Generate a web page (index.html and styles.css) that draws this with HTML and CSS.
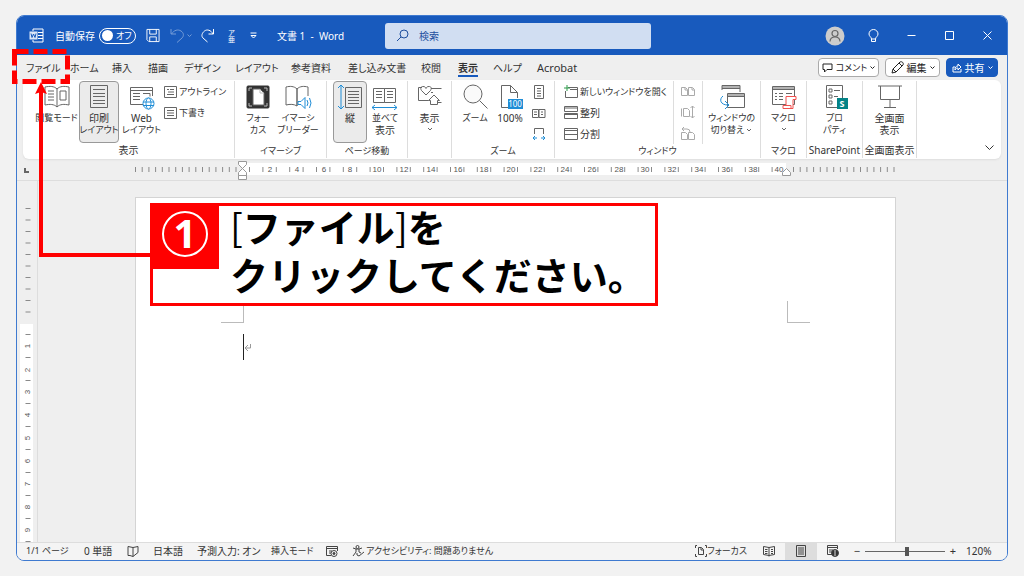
FILE: index.html
```html
<!DOCTYPE html>
<html lang="ja">
<head>
<meta charset="utf-8">
<title>文書 1 - Word</title>
<link rel="stylesheet" href="styles.css">
</head>
<body>
<div class="window">
  <header class="titlebar">
    <svg class="ico" width="15" height="15" viewBox="0 0 15 15"><path d="M4 3V1h10v13H4v-2M9 4.500h5M9 7.500h5M9 10.500h5"/><rect x="0.500" y="3.500" width="8" height="8" fill="#dbe6f7" stroke="none"/><path d="M2 5.500l1 4 1.500-3.500L6 9.500l1-4" stroke="#185abd"/></svg>
    <span class="autosave">自動保存</span>
    <button class="toggle" aria-label="自動保存 オフ"><i class="knob"></i>オフ</button>
    <button class="tb" aria-label="上書き保存"><svg class="ico" width="14" height="15" viewBox="0 0 15 15"><path d="M1 1h13v13H3l-2-2zM4 1v5h7V1M4 14V9h7v5"/></svg></button>
    <button class="tb dim" aria-label="元に戻す"><svg class="ico" width="23" height="15" viewBox="0 0 23 15"><path d="M1 1v5h5M1.500 6C4 2 8 1 11 3s3 5 1 7l-5 4.500M17.500 6.500l2 2 2-2"/></svg></button>
    <button class="tb" aria-label="やり直し"><svg class="ico" width="14" height="15" viewBox="0 0 14 15"><path d="M12.500 1v5h-5M12 6C10 2 6 1 3.500 3S0 8 2 10l4.500 4"/></svg></button>
    <button class="tb furigana" aria-label="ルビ"><span>ア</span><span>亜</span></button>
    <button class="tb" aria-label="カスタマイズ"><svg class="ico" width="7" height="7" viewBox="0 0 7 7"><path d="M0.500 1h6M1 3.500l2.500 2.500 2.500-2.500z"/></svg></button>
    <h1 class="doc-title">文書 1&nbsp; -&nbsp; Word</h1>
    <label class="search"><svg width="13" height="13" viewBox="0 0 13 13"><circle cx="8" cy="5" r="4"/><path d="M5 8l-4 4"/></svg><input type="search" placeholder="検索" aria-label="検索"></label>
    <div class="window-buttons">
      <button aria-label="アカウント"><svg width="20" height="20" viewBox="0 0 20 20"><circle cx="10" cy="10" r="9.500" fill="#ccc"/><g fill="none" stroke="#666" stroke-width="1.200"><circle cx="10" cy="7.500" r="3"/><path d="M5 15.500c.3-6 9.700-6 10 0"/></g></svg></button>
      <button aria-label="ヒント"><svg class="ico" width="11" height="14" viewBox="0 0 11 14"><path d="M3.500 10C3.500 8 1 7.500 1 5a4.500 4.500 0 0 1 9 0c0 2.500-2.500 3-2.500 5v2.500h-4zM3.500 10h4"/></svg></button>
      <button aria-label="最小化"><svg class="ico" width="9" height="9" viewBox="0 0 9 9"><path d="M0.500 4.500h8"/></svg></button>
      <button aria-label="最大化"><svg class="ico" width="9" height="9" viewBox="0 0 9 9"><path d="M0.500 0.500h8v8h-8z"/></svg></button>
      <button aria-label="閉じる"><svg class="ico" width="9" height="9" viewBox="0 0 9 9"><path d="M0.500 0.500l8 8M8.500 0.500l-8 8"/></svg></button>
    </div>
  </header>

  <nav class="tabs">
    <a href="#" class="kana">ファイル</a><a href="#">ホーム</a><a href="#">挿入</a><a href="#">描画</a><a href="#" class="kana">デザイン</a><a href="#" class="kana">レイアウト</a><a href="#">参考資料</a><a href="#">差し込み文書</a><a href="#">校閲</a><a href="#" class="active">表示</a><a href="#" class="kana">ヘルプ</a><a href="#" class="latin">Acrobat</a>
    <div class="actions">
      <button class="comment"><svg width="11" height="10" viewBox="0 0 11 10"><path d="M1 1h9v5.500H5L2.500 9V6.500H1z"/></svg>コメント<svg width="5" height="4" viewBox="0 0 5 4"><path d="M0.500 0.500l2 2 2-2"/></svg></button>
      <button class="edit"><svg width="13" height="13" viewBox="0 0 13 13"><path d="M1 12l1-4 7-7c2-1 4 1 3 3l-7 7zM8 2l3 3M2 8l3 3"/></svg>編集<svg width="5" height="4" viewBox="0 0 5 4"><path d="M0.500 0.500l2 2 2-2"/></svg></button>
      <button class="share"><svg width="10" height="10" viewBox="0 0 10 10"><path d="M3 4H1v5h8V6M3 7c0-3 1-4 3-4V1l3 3-3 3V5C5 5 4 5 3 7z"/></svg>共有<svg width="5" height="4" viewBox="0 0 5 4"><path d="M0.500 0.500l2 2 2-2"/></svg></button>
    </div>
  </nav>

  <section class="ribbon" aria-label="表示リボン">
    <div class="group g-views">
      <div class="tools">
        <button class="tool"><svg width="26" height="26" viewBox="0 0 26 26"><path d="M13 5C10 2 6 2 1 3v18c5-1 9-1 12 2 3-3 7-3 12-2V3c-5-1-9-1-12 2zM13 5v18M4 7h6M4 10h6M4 13h6M4 16h6M16 7h6v9h-6z"/></svg><span class="kana">閲覧モード</span></button>
        <button class="tool selected"><svg width="26" height="26" viewBox="0 0 26 26"><path d="M4.500 1.500h17v22h-17zM7 5.500h12M7 9.500h12M7 12.500h12M7 16.500h12M7 19.500h12"/></svg><span>印刷</span><span class="kana">レイアウト</span></button>
        <button class="tool"><svg width="26" height="26" viewBox="0 0 26 26"><path d="M14 20.500H1.500v-17h22V12M1.500 6.500h22M4 9.500h7M4 12.500h7M4 15.500h7M14 9.500h7v3"/><g stroke="#1f8dd6" fill="#fff"><circle cx="19.500" cy="19.500" r="5.500"/><ellipse cx="19.500" cy="19.500" rx="2.500" ry="5.500"/><path d="M14 18h11M14 21.500h11"/></g></svg><span>Web</span><span class="kana">レイアウト</span></button>
        <div class="stack">
          <button><svg width="13" height="12" viewBox="0 0 13 12"><path d="M.5.5h12v11H.5zM3 3.500h2M6 3.500h4M4 6h6M3 8.500h7"/></svg><span class="kana">アウトライン</span></button>
          <button><svg width="13" height="12" viewBox="0 0 13 12"><path d="M.5.5h12v11H.5zM3 3.500h7M3 6h7M3 8.500h7"/></svg><span class="kana">下書き</span></button>
        </div>
      </div>
      <div class="caption">表示</div>
    </div>
    <div class="group g-immersive">
      <div class="tools">
        <button class="tool"><svg width="26" height="26" viewBox="0 0 26 26"><rect x="2" y="2" width="22" height="22" rx="1" fill="#333" stroke="#333"/><path d="M8 5h7l4 4v12H8z" fill="#fff"/><path d="M15 5v4h4M4 7V4h3M22 7V4h-3M4 19v3h3M22 19v3h-3" stroke="#bbb"/></svg><span class="kana">フォー</span><span class="kana">カス</span></button>
        <button class="tool"><svg width="28" height="26" viewBox="0 0 28 26"><path d="M13 5C10 2 6 2 2 3v18c4-1 8-1 11 1V5c3-3 7-3 11-2v9M13 22V5"/><path d="M14 17.500h3l4-4v11l-4-4h-3zM23 16q2 3 0 6M25.500 14q3 5 0 10" stroke="#1f8dd6" fill="#fff"/></svg><span class="kana">イマーシ</span><span class="kana">ブリーダー</span></button>
      </div>
      <div class="caption kana">イマーシブ</div>
    </div>
    <div class="group g-move">
      <div class="tools">
        <button class="tool selected"><svg width="26" height="26" viewBox="0 0 26 26"><path d="M8.500 3.500h16v20h-16zM11 7.500h11M11 10.500h11M11 13.500h11M11 16.500h11M11 19.500h11"/><path d="M4 1v24M1 4l3-3 3 3M1 22l3 3 3-3" stroke="#1f8dd6"/></svg><span>縦</span></button>
        <button class="tool"><svg width="26" height="26" viewBox="0 0 26 26"><path d="M1.500 4.500h11v14h-11zM12.500 4.500h11v14h-11zM4 7.500h6M4 10.500h6M4 13.500h6M15 7.500h6M15 10.500h6M15 13.500h6"/><path d="M0 23.500h25M3 21l-3 2.500 3 2.500M22 21l3 2.500-3 2.500" stroke="#1f8dd6"/></svg><span class="kana">並べて</span><span>表示</span></button>
      </div>
      <div class="caption kana">ページ移動</div>
    </div>
    <div class="group g-show">
      <div class="tools">
        <button class="tool"><svg width="26" height="26" viewBox="0 0 26 26"><path d="M5 3.500H1.500v13h10M14 4.500h10.500M14 8.500h2M21 18.500h3.500"/><path d="M9 11L4.500 6.500C3 4 4 2.500 6 2.500c1.500 0 2.500.5 3 2 .5-1.500 1.500-2 3-2 2 0 3 1.500 1.500 4z"/><path d="M13.500 20.500v-4h-2l5.500-5.500 5.500 5.500h-2v4z"/></svg><span>表示</span><svg width="6" height="10" viewBox="0 0 6 10"><path d="M1 4l2 2 2-2"/></svg></button>
      </div>
    </div>
    <div class="group g-zoom">
      <div class="tools">
        <button class="tool"><svg width="26" height="26" viewBox="0 0 26 26"><circle cx="11" cy="10" r="9" fill="#fafafa"/><path d="M17.500 16.500l8 8"/></svg><span class="kana">ズーム</span></button>
        <button class="tool"><svg width="26" height="26" viewBox="0 0 26 26"><path d="M4.500 23.500v-22h9l7 7V14M13.500 1.500v7h7M4.500 23.500h7"/><rect x="11" y="15" width="15" height="10" fill="#1f8dd6" stroke="none"/><text x="18" y="23" class="badge">100</text></svg><span class="latin">100%</span></button>
        <div class="stack">
          <button aria-label="1 ページ"><svg width="14" height="14" viewBox="0 0 14 14"><path d="M2.500.5h9v13h-9zM5 3.500h4M5 6h4M5 8.500h4M5 11h4"/></svg></button>
          <button aria-label="複数ページ"><svg width="14" height="14" viewBox="0 0 14 14"><path d="M.5 3.500h6v8h-6zM7 3.500h6v8H7zM2 6h3M2 8.500h3M9 6h2M9 8.500h2"/></svg></button>
          <button aria-label="ページ幅を基準に表示"><svg width="14" height="14" viewBox="0 0 14 14"><path d="M2.500 7V1.500h9V7"/><path d="M1 11h4M9 11h4M3 9l-2 2 2 2M11 9l2 2-2 2" stroke="#1f8dd6"/></svg></button>
        </div>
      </div>
      <div class="caption kana">ズーム</div>
    </div>
    <div class="group g-window">
      <div class="tools">
        <div class="stack">
          <button><svg width="14" height="13" viewBox="0 0 14 13"><path d="M4 2.500h9.500v10H1.500V6M6 4.500h7"/><path d="M3 0v6M0 3h6" stroke="#2c9b4b"/></svg><span class="kana">新しいウィンドウを開く</span></button>
          <button><svg width="14" height="13" viewBox="0 0 14 13"><path d="M.5.5h13v5H.5zM.5 7.500h13v5H.5zM1 2h12M1 8.500h12"/></svg><span>整列</span></button>
          <button><svg width="14" height="13" viewBox="0 0 14 13"><path d="M.5 1.500h13v11H.5zM.5 3.500h13M.5 7.500h13"/></svg><span>分割</span></button>
        </div>
        <div class="stack ruled">
          <button aria-label="並べて比較"><svg width="14" height="13" viewBox="0 0 14 13"><path d="M.5 2.500h4l2 2v6h-6zM7.500 2.500h4l2 2v6h-6zM4 3v2h2M11 3v2h2"/></svg></button>
          <button aria-label="同時にスクロール"><svg width="14" height="13" viewBox="0 0 14 13"><path d="M.5 2.500v8M2.500 2.500h4l2 2v6h-6zM11.500 0v12M9.500 2l2-2 2 2M9.500 10l2 2 2-2"/></svg></button>
          <button aria-label="ウィンドウの位置を元に戻す"><svg width="14" height="13" viewBox="0 0 14 13"><path d="M.5 5.500h4l2 2v5h-6zM7.500 5.500h4l2 2v5h-6zM3 0L1 2l2 2M1 2h5q3 0 3 3"/></svg></button>
        </div>
        <button class="tool"><svg width="28" height="26" viewBox="0 0 28 26"><path d="M4 6V1.500h18V8M4 3h18M4 4.500h18M9.500 9.500h17v14h-17zM9.500 11h17M9.500 12.500h17"/><path d="M5 12c-4 3-3 9 5 9M7 17l4 4-4 4" stroke="#1f8dd6"/></svg><span class="kana">ウィンドウの</span><span class="kana">切り替え <svg width="6" height="5" viewBox="0 0 6 5"><path d="M1 1l2 2 2-2"/></svg></span></button>
      </div>
      <div class="caption kana">ウィンドウ</div>
    </div>
    <div class="group g-macro">
      <div class="tools"><button class="tool"><svg width="26" height="26" viewBox="0 0 26 26"><path d="M1.500 2.500h22v18h-22zM1.500 4h22M1.500 5.500h22M4 9.500h2M4 12.500h2M4 15.500h2M8 9.500h4M8 12.500h4M8 15.500h4M15 9.500h6"/><path d="M15 12.500h10v3h-3v9H12v-3h3zM15 21.500h5v3" stroke="#f0504f" fill="#fff"/></svg><span class="kana">マクロ</span><svg width="6" height="10" viewBox="0 0 6 10"><path d="M1 4l2 2 2-2"/></svg></button></div>
      <div class="caption kana">マクロ</div>
    </div>
    <div class="group g-share">
      <div class="tools"><button class="tool"><svg width="26" height="26" viewBox="0 0 26 26"><path d="M4.500 1.500h16v22h-16zM7 5h3v3H7zM7 11h3v3H7zM7 17h3v3H7zM12 6.500h6M12 12.500h4"/><rect x="15" y="14" width="11" height="11" fill="#038387" stroke="none"/><text x="20" y="23" class="badge bold">S</text></svg><span class="kana">プロ</span><span class="kana">パティ</span></button></div>
      <div class="caption latin">SharePoint</div>
    </div>
    <div class="group g-full">
      <div class="tools"><button class="tool"><svg width="26" height="26" viewBox="0 0 26 26"><path d="M1 2h24M3.500 2v13.500h19V2M13 15.500v8M7 23.500h12"/></svg><span>全画面</span><span>表示</span></button></div>
      <div class="caption">全画面表示</div>
    </div>
    <button class="collapse" aria-label="リボンを折りたたむ"><svg width="9" height="6" viewBox="0 0 9 6"><path d="M.5.5l4 4 4-4"/></svg></button>
  </section>

  <svg class="hruler" viewBox="17 159 990 21" preserveAspectRatio="xMinYMin slice">
    <rect x="243" y="163" width="543" height="12" fill="#fff"/>
    <path d="M25 168v4h4" fill="none" stroke="#666" stroke-width="2"/>
    <g stroke="#8a8a8a" stroke-width="5" fill="none">
      <path d="M135 169.500h103" stroke-dasharray="1 5.700"/>
      <path d="M249 169.500h526" stroke-dasharray="1 12.400"/>
      <path d="M793 169.500h103" stroke-dasharray="1 5.700"/>
    </g>
    <g class="ruler-text"><text x="270" y="172">2</text><text x="297" y="172">4</text><text x="324" y="172">6</text><text x="350" y="172">8</text><text x="377" y="172">10</text><text x="404" y="172">12</text><text x="431" y="172">14</text><text x="458" y="172">16</text><text x="484" y="172">18</text><text x="511" y="172">20</text><text x="538" y="172">22</text><text x="565" y="172">24</text><text x="592" y="172">26</text><text x="619" y="172">28</text><text x="645" y="172">30</text><text x="672" y="172">32</text><text x="699" y="172">34</text><text x="726" y="172">36</text><text x="753" y="172">38</text><text x="779" y="172">40</text></g>
    <g fill="#fff" stroke="#999"><path d="M238.500 161.500h8v3l-4 4-4-4zM238.500 175.500v-3l4-4 4 4v3zM238.500 175.500h8v4h-8zM782.500 175.500v-3l4-4 4 4v3z"/></g>
  </svg>

  <main class="workspace">
    <svg class="vruler" width="22" height="361" viewBox="17 181 22 361">
      <rect x="20" y="324" width="13" height="218" fill="#fff"/>
      <path d="M37.500 181v361" stroke="#ddd"/>
      <g stroke="#8a8a8a" stroke-width="5" fill="none">
        <path d="M28 208v106" stroke-dasharray="1 10.500"/>
        <path d="M28 334v208" stroke-dasharray="1 22"/>
      </g>
      <g class="ruler-text"><text transform="translate(30 346) rotate(-90)">1</text><text transform="translate(30 370) rotate(-90)">2</text><text transform="translate(30 392) rotate(-90)">3</text><text transform="translate(30 415) rotate(-90)">4</text><text transform="translate(30 438) rotate(-90)">5</text><text transform="translate(30 461) rotate(-90)">6</text><text transform="translate(30 484) rotate(-90)">7</text><text transform="translate(30 507) rotate(-90)">8</text><text transform="translate(30 530) rotate(-90)">9</text></g>
    </svg>
    <article class="page">
      <div class="corners"><i class="corner left"></i><i class="corner right"></i></div>
      <div class="line"><svg width="8" height="9" viewBox="0 0 8 9"><path d="M6.500 1v4H1M4 2L1 5l3 3" fill="none" stroke="#999"/></svg></div>
    </article>
  </main>

  <footer class="status">
    <div class="status-left">
      <span class="kana">1/1 ページ</span><span>0 単語</span>
      <svg width="12" height="11" viewBox="0 0 12 11"><path d="M6 1.500L1 .5v9h2l3 1 5-4v-6l-5 1v9"/></svg>
      <span>日本語</span><span>予測入力: オン</span><span class="kana">挿入モード</span>
      <svg width="12" height="11" viewBox="0 0 12 11"><path d="M5 9.500H.5v-9h11V5M.5 2.500h11M3 5h3M3 7h2"/><circle cx="8" cy="7.500" r="3"/><circle cx="8" cy="7.500" r="1" fill="#333"/></svg>
      <svg width="13" height="12" viewBox="0 0 13 12"><path d="M1 3l3 1h3l3-1M4 4v3l-3 4M5 8v2l2 1 5-4M7 4v3l2 1"/><circle cx="5.500" cy="2" r="1.500"/></svg>
      <span class="kana">アクセシビリティ: 問題ありません</span>
    </div>
    <div class="status-right">
      <button class="focus"><svg width="12" height="12" viewBox="0 0 12 12"><path d="M3.500 2.500h3l2 2v5h-5zM6 3v2h2M.5 3V.5H2M11.500 3V.5H10M.5 9v2.500H2M11.500 9v2.500H10"/></svg><span class="kana">フォーカス</span></button>
      <button class="view" aria-label="閲覧モード"><svg width="12" height="11" viewBox="0 0 12 11"><path d="M6 1.500L.5.500v8l5.500 1 5.500-1v-8zM6 1.500v9M2 3.500h2.500M2 5.500h2.500M8 3.500h2M8 5.500h2M2 7.500h2.500M8 7.500h2"/></svg></button>
      <button class="view on" aria-label="印刷レイアウト"><svg width="10" height="12" viewBox="0 0 10 12"><path d="M.5.5h9v11h-9zM2 3h6M2 5h6M2 7h6M2 9h6"/></svg></button>
      <button class="view" aria-label="Web レイアウト"><svg width="12" height="12" viewBox="0 0 12 12"><path d="M5 9.500H.5v-9h10V4M.5 2.500h10M2 5h4M2 7h3"/><circle cx="8" cy="8" r="3.500" fill="#333"/><path d="M8 5v6" stroke="#ddd"/></svg></button>
      <button class="step">−</button>
      <input type="range" min="0" max="100" value="53" aria-label="ズーム">
      <button class="step">+</button>
      <span class="percent">120%</span>
    </div>
  </footer>
</div>

<svg class="pointer" width="160" height="270" viewBox="0 0 160 270">
  <rect x="14.500" y="51.500" width="53" height="30" stroke-width="5" stroke-dasharray="14 5"/>
  <path d="M152 255H41V90" stroke-width="4"/>
  <path d="M41 82l6 12-6-2-6 2z" fill="#f00" stroke="none"/>
</svg>
<aside class="callout">
  <svg class="number" width="69" height="66" viewBox="0 0 69 66"><circle cx="35" cy="31" r="22"/><text x="35" y="45">1</text></svg>
  <p><span class="bracket">[</span>ファイル<span class="bracket">]</span>を<br>クリックしてください。</p>
</aside>
</body>
</html>
```
FILE: styles.css
```css
* { box-sizing: border-box; }
body {
  margin: 0;
  height: 100vh;
  padding: 15px 16px;
  display: flex;
  background: #f2f2f2;
  color: #333;
  font: 10px/12px "Noto Sans", "Noto Sans CJK JP", sans-serif;
  font-feature-settings: "palt";
  position: relative;
}
button, input { font: inherit; color: inherit; border: 0; background: none; padding: 0; margin: 0; font-feature-settings: inherit; }
a { color: inherit; text-decoration: none; }
svg { display: block; flex: none; }
.kana { font-size: 9px; }

.window {
  flex: 1;
  min-width: 0;
  display: flex;
  flex-direction: column;
  border: 1px solid #3f7ad0;
  border-radius: 8px;
  background: #efefef;
  overflow: hidden;
}

.titlebar {
  height: 39px;
  flex: none;
  padding-left: 12px;
  display: grid;
  grid-template-columns: 26px 44px 47px 24px 31px 27px 22px 27px 108px 266px 1fr;
  align-items: center;
  background: #185abd;
  color: #fff;
}
.titlebar .ico { fill: none; stroke: #fff; }
.toggle {
  width: 37px;
  height: 16px;
  display: flex;
  align-items: center;
  gap: 3px;
  padding-left: 2px;
  border: 1px solid #fff;
  border-radius: 8px;
  font-size: 9px;
}
.knob { width: 11px; height: 11px; border-radius: 50%; background: #fff; }
.tb { justify-self: start; }
.dim { opacity: .4; }
.furigana { display: flex; flex-direction: column; font-size: 7px; line-height: 7px; }
.doc-title { margin: 0; font-size: 10px; font-weight: 400; white-space: nowrap; }
.search {
  height: 26px;
  display: flex;
  align-items: center;
  gap: 10px;
  padding: 0 11px;
  border-radius: 3px;
  background: #d1def2;
  color: #1e4f9e;
}
.search svg { fill: none; stroke: #1e4f9e; stroke-width: 1; }
.search input { flex: 1; min-width: 0; outline: 0; font-size: 10px; }
.search input::placeholder { color: #1e4f9e; }
.window-buttons { display: flex; justify-content: flex-end; padding-right: 1px; }
.window-buttons button { width: 38px; height: 39px; display: flex; align-items: center; justify-content: center; }

.tabs {
  height: 25px;
  flex: none;
  padding: 0 9px;
  display: grid;
  grid-template-columns: 44px 42px 36px 36px 51px 56px 57px 73px 37px 35px 44px 60px 1fr;
  align-items: center;
  white-space: nowrap;
}
.tabs a { justify-self: start; line-height: 14px; padding: 2px 0 0; border-bottom: 2px solid transparent; }
.tabs .kana { font-size: 10px; }
.tabs .active { font-weight: 700; border-color: #185abd; }
.tabs .latin { font-size: 11px; }
.actions { display: flex; justify-content: flex-end; gap: 6px; }
.actions button {
  height: 19px;
  display: flex;
  align-items: center;
  justify-content: center;
  gap: 3px;
  border: 1px solid #aaa;
  border-radius: 4px;
  background: #fff;
  color: #222;
}
.actions svg { fill: none; stroke: currentColor; }
.actions .comment { width: 61px; font-size: 9px; }
.actions .edit { width: 55px; }
.actions .share { width: 52px; border-color: #185abd; background: #185abd; color: #fff; }

.ribbon {
  flex: none;
  margin: 0 6px;
  padding: 1px 0;
  display: grid;
  grid-template-columns: 212px 92px 81px 44px 103px 206px 46px 56px 54px 1fr;
  background: #fff;
  border-radius: 6px;
  box-shadow: 0 1px 2px #ddd;
  white-space: nowrap;
}
.ribbon svg { fill: none; stroke: #666; }
.group { display: flex; flex-direction: column; border-right: 1px solid #ddd; }
.tools { height: 62px; display: grid; justify-content: start; }
.caption { text-align: center; line-height: 15px; }
.g-views .tools { padding-left: 11px; grid-template-columns: 45px 40px 45px auto; }
.g-immersive .tools { padding-left: 3px; grid-template-columns: 40px 40px; }
.g-move .tools { padding-left: 6px; grid-template-columns: 34px 36px; }
.g-zoom .tools { padding-left: 5px; grid-template-columns: 36px 34px 24px; }
.g-window .tools { padding-left: 9px; grid-template-columns: 109px 30px 57px; }
.g-show .tools, .g-macro .tools, .g-share .tools, .g-full .tools { grid-template-columns: 1fr; justify-content: stretch; }
.tool { display: flex; flex-direction: column; align-items: center; justify-content: flex-start; padding-top: 2px; border: 1px solid transparent; border-radius: 4px; min-width: 0; }
.tool > svg:first-child { margin-bottom: 2px; }
.tool span { line-height: 12px; }
.tool span svg { display: inline-block; }
.selected { background: #ebebeb; border-color: #999; }
.stack { display: flex; flex-direction: column; }
.stack button { height: 21px; display: flex; align-items: center; gap: 2px; }
.g-zoom .stack, .g-window .ruled { align-items: center; }
.ruled { border: solid #ddd; border-width: 0 1px; }
.ribbon .ruled svg { stroke: #aaa; }
.ribbon .badge { fill: #fff; stroke: none; font-size: 8px; text-anchor: middle; }
.ribbon .bold { font-weight: 700; font-size: 9px; }
.collapse { align-self: end; justify-self: end; padding: 7px; }
.collapse svg { stroke: #333; }

.hruler { width: 100%; height: 22px; flex: none; border-bottom: 1px solid #ddd; }
.ruler-text { font: 8px "Liberation Sans", sans-serif; fill: #555; text-anchor: middle; }

.workspace { flex: 1; min-height: 0; display: flex; overflow: hidden; }
.page {
  flex: 1;
  margin: 16px 111px 0 96px;
  padding: 103px 85px 0;
  border: 1px solid #d4d4d4;
  border-bottom: 0;
  background: #fff;
}
.corners { display: flex; justify-content: space-between; }
.corner { width: 23px; height: 22px; border-bottom: 1px solid #bbb; }
.left { border-right: 1px solid #bbb; }
.right { border-left: 1px solid #bbb; }
.line { margin: 11px 0 0 22px; height: 26px; display: flex; align-items: center; border-left: 1px solid #222; }

.status {
  height: 18px;
  flex: none;
  padding: 0 0 1px 9px;
  display: flex;
  justify-content: space-between;
  border-top: 1px solid #ddd;
  background: #f4f4f4;
  white-space: nowrap;
}
.status svg { fill: none; stroke: #444; }
.status-left { display: grid; grid-template-columns: 58px 43px 26px 44px 74px 55px 26px 14px auto; align-items: center; }
.status-right { display: flex; align-items: center; padding-right: 13px; }
.focus { display: flex; align-items: center; margin-right: 6px; }
.view { width: 32px; height: 17px; display: flex; align-items: center; justify-content: center; }
.on { background: #ddd; }
.step { width: 16px; font-size: 11px; }
.status input { appearance: none; width: 80px; height: 12px; background: linear-gradient(#666, #666) center / 100% 1px no-repeat; }
.status input::-webkit-slider-thumb { appearance: none; width: 4px; height: 9px; background: #555; }
.percent { width: 33px; padding-left: 5px; }

.pointer { position: absolute; left: 0; top: 0; fill: none; stroke: #f00; pointer-events: none; }
.callout {
  position: absolute;
  left: 150px;
  top: 203px;
  width: 508px;
  display: flex;
  gap: 11px;
  border: 3px solid #f00;
  background: #fff;
  color: #000;
}
.number { margin: -3px 0 0 -3px; background: #f00; }
.number circle { fill: none; stroke: #fff; stroke-width: 2; }
.number text { fill: #fff; font: 700 40px "Noto Sans", sans-serif; text-anchor: middle; }
.callout p { margin: -4px 0 0; padding-bottom: 5px; font: 700 38px/48px "Noto Sans CJK JP", sans-serif; font-feature-settings: normal; white-space: nowrap; }
.bracket { font-weight: 400; }
```
